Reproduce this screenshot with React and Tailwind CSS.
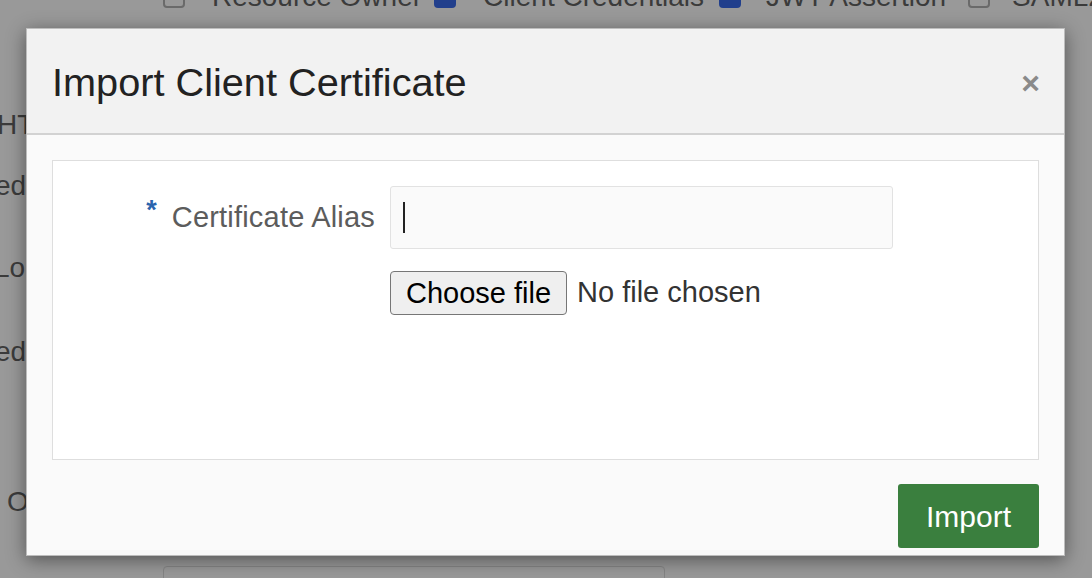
export default function App() {
  return (
    <div className="relative h-[578px] w-full overflow-hidden bg-[#999999] font-['Liberation_Sans',Arial,sans-serif] text-[#3b3b3b]">
      {/* page behind the backdrop */}
      <div className="mt-[-19px] ml-[163px] flex items-center text-[28px] leading-[32px] whitespace-nowrap">
        <span className="h-[22px] w-[22px] shrink-0 rounded-[4px] border-2 border-[#6a6a6a]" />
        <span className="mr-[12px] ml-[27px]">Resource Owner</span>
        <span className="h-[22px] w-[22px] shrink-0 rounded-[4px] bg-[#213f8c]" />
        <span className="mr-[15px] ml-[27px]">Client Credentials</span>
        <span className="h-[22px] w-[22px] shrink-0 rounded-[4px] bg-[#213f8c]" />
        <span className="mr-[22px] ml-[25px]">JWT Assertion</span>
        <span className="h-[22px] w-[22px] shrink-0 rounded-[4px] border-2 border-[#6a6a6a]" />
        <span className="ml-[22px]">SAML2 Assertion</span>
      </div>
      <div className="mt-[96px] ml-[-3px] flex flex-col text-[28px] leading-[32px] whitespace-nowrap">
        <span>HTTP</span>
        <span className="mt-[29px] ml-[-2px]">ed</span>
        <span className="mt-[50px] ml-[-3px]">Lo</span>
        <span className="mt-[52px] ml-[-2px]">ed</span>
        <span className="mt-[118px] ml-[10px]">O</span>
      </div>
      <div className="mt-[48px] ml-[163px] h-[40px] w-[502px] rounded-[4px] border border-[#858585]" />

      {/* modal */}
      <div className="absolute left-[26px] top-[28px] flex h-[528px] w-[1039px] flex-col border border-[#bdbdbd] bg-[#fafafa] shadow-[0_4px_18px_rgba(0,0,0,0.45)]">
        <div className="flex h-[106px] shrink-0 items-center justify-between border-b-2 border-[#d2d2d2] bg-[#f2f2f2] pl-[25px] pr-[24px]">
          <h1 className="mt-[4px] text-[39.7px] font-normal text-[#222222]">Import Client Certificate</h1>
          <button className="mt-[4px] text-[32px] leading-none font-bold text-[#8a8a8a]">×</button>
        </div>
        <div className="px-[25px] pt-[25px]">
          <div className="h-[300px] border border-[#dedede] bg-white pt-[25px]">
            <div className="flex items-center">
              <label className="flex w-[322px] shrink-0 items-center justify-end gap-[15px] text-[29px] text-[#5c5c5c]">
                <span className="mt-[-14px] text-[27px] font-bold text-[#2a64ad]">*</span>
                <span className="tracking-[0.2px]">Certificate Alias</span>
              </label>
              <div className="ml-[15px] flex h-[63px] w-[503px] items-center rounded-[3px] border border-[#e2e2e2] bg-[#fafafa] pl-[12px]">
                <span className="h-[31px] w-[2px] bg-[#222222]" />
              </div>
            </div>
            <div className="mt-[22px] ml-[337px] flex items-center gap-[10px] text-[29px]">
              <button className="h-[44px] w-[177px] rounded-[4px] border border-[#767676] bg-[#efefef] text-black">Choose file</button>
              <span className="text-[#333333]">No file chosen</span>
            </div>
          </div>
          <div className="mt-[24px] flex justify-end">
            <button className="h-[64px] w-[141px] rounded-[3px] bg-[#3a7f3e] text-[30px] text-white">Import</button>
          </div>
        </div>
      </div>
    </div>
  )
}
